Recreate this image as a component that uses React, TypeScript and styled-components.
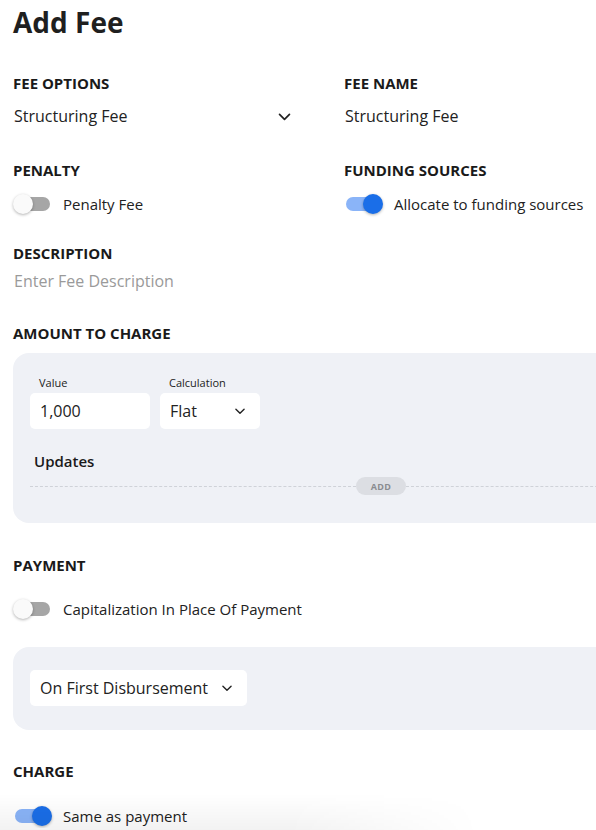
import styled, { createGlobalStyle } from 'styled-components';

const GlobalStyle = createGlobalStyle`
  html, body {
    margin: 0;
    padding: 0;
    background: #ffffff;
    overflow: hidden;
  }
  body {
    font-family: 'Open Sans', 'Noto Sans', sans-serif;
    color: #222;
  }
`;

const Chevron = ({ size = 14 }: { size?: number }) => (
  <svg width={size} height={size} viewBox="0 0 24 24" fill="none" stroke="#222" strokeWidth={2.4} strokeLinecap="round" strokeLinejoin="round">
    <polyline points="5 9 12 16 19 9" />
  </svg>
);

const Page = styled.div`
  width: 640px;
  padding: 4px 0 0 13px;
  box-sizing: border-box;
`;

const Title = styled.h1`
  margin: 0;
  font-size: 28px;
  line-height: 36px;
  font-weight: 700;
  color: #1f1f1f;
`;

const Grid = styled.div`
  display: grid;
  grid-template-columns: 301px 300px;
  column-gap: 30px;
  margin-top: 33px;
`;

const Field = styled.div<{ $span?: boolean; $top?: number; $gap: number }>`
  display: flex;
  flex-direction: column;
  gap: ${(p) => p.$gap}px;
  margin-top: ${(p) => p.$top ?? 0}px;
  grid-column: ${(p) => (p.$span ? '1 / -1' : 'auto')};
`;

const Label = styled.div`
  font-size: 15px;
  line-height: 20px;
  font-weight: 700;
  text-transform: uppercase;
  color: #1a1a1a;
`;

const Value = styled.div<{ $placeholder?: boolean }>`
  display: flex;
  align-items: center;
  justify-content: space-between;
  padding: 0 21px 0 1px;
  font-size: 16px;
  line-height: 24px;
  color: ${(p) => (p.$placeholder ? '#9a9a9a' : '#222')};
`;

const ToggleRow = styled.label<{ $top?: number }>`
  display: flex;
  align-items: center;
  gap: 13px;
  margin-top: ${(p) => p.$top ?? 0}px;
  font-size: 15px;
  line-height: 24px;
  color: #222;
`;

const Track = styled.span<{ $on?: boolean }>`
  position: relative;
  display: inline-block;
  width: 35px;
  height: 14px;
  margin-left: 2px;
  border-radius: 7px;
  background: ${(p) => (p.$on ? '#8ab4f8' : '#a6a6a6')};
  flex-shrink: 0;
`;

const Thumb = styled.span<{ $on?: boolean }>`
  position: absolute;
  top: -3px;
  left: ${(p) => (p.$on ? '17px' : '-2px')};
  width: 20px;
  height: 20px;
  border-radius: 50%;
  background: ${(p) => (p.$on ? '#1a6ee8' : '#fafafa')};
  box-shadow: 0 1px 3px rgba(0, 0, 0, 0.3);
`;

const Toggle = ({ on, label, top }: { on?: boolean; label: string; top?: number }) => (
  <ToggleRow $top={top}>
    <Track $on={on}>
      <Thumb $on={on} />
    </Track>
    {label}
  </ToggleRow>
);

const Section = styled.div<{ $top: number; $gap: number }>`
  display: flex;
  flex-direction: column;
  gap: ${(p) => p.$gap}px;
  margin-top: ${(p) => p.$top}px;
`;

const Panel = styled.div`
  background: #eff1f6;
  border-radius: 16px;
  padding: 22px 17px 28px;
  display: flex;
  flex-direction: column;
`;

const InputRow = styled.div`
  display: flex;
  gap: 10px;
`;

const InputGroup = styled.div`
  display: flex;
  flex-direction: column;
  gap: 2px;
`;

const SmallLabel = styled.div`
  font-size: 11px;
  line-height: 16px;
  padding-left: 9px;
  color: #222;
`;

const Box = styled.div<{ $width: number }>`
  width: ${(p) => p.$width}px;
  height: 36px;
  box-sizing: border-box;
  background: #fff;
  border-radius: 5px;
  padding: 0 13px 0 10px;
  display: flex;
  align-items: center;
  justify-content: space-between;
  gap: 8px;
  font-size: 16px;
  white-space: nowrap;
  color: #222;

  svg {
    flex-shrink: 0;
  }
`;

const Updates = styled.div`
  margin: 21px 0 0 4px;
  font-size: 15px;
  font-weight: 600;
  line-height: 22px;
  color: #1a1a1a;
`;

const DashRow = styled.div`
  display: flex;
  align-items: center;
  margin-top: 5px;
`;

const Dash = styled.div<{ $width?: number }>`
  flex: ${(p) => (p.$width ? `0 0 ${p.$width}px` : '1')};
  border-top: 1px dashed #cfd2d8;
`;

const AddPill = styled.button`
  border: none;
  background: #dcdee3;
  color: #8a8c90;
  font-family: inherit;
  font-size: 9px;
  font-weight: 700;
  letter-spacing: 0.3px;
  width: 50px;
  height: 18px;
  border-radius: 9px;
  padding: 0;
`;

const PaymentPanel = styled(Panel)`
  padding: 23px 17px 24px;
  margin-top: 26px;
`;

const BottomShade = styled.div`
  position: fixed;
  left: 0;
  bottom: 0;
  width: 480px;
  height: 36px;
  pointer-events: none;
  background: linear-gradient(to bottom, rgba(0, 0, 0, 0), rgba(0, 0, 0, 0.05));
  -webkit-mask-image: linear-gradient(to right, #000 60%, transparent);
  mask-image: linear-gradient(to right, #000 60%, transparent);
`;

export default function App() {
  return (
    <>
      <GlobalStyle />
      <Page>
        <Title>Add Fee</Title>
        <Grid>
          <Field $gap={11}>
            <Label>Fee Options</Label>
            <Value>
              Structuring Fee
              <Chevron size={17} />
            </Value>
          </Field>
          <Field $gap={11}>
            <Label>Fee Name</Label>
            <Value>Structuring Fee</Value>
          </Field>
          <Field $gap={12} $top={32}>
            <Label>Penalty</Label>
            <Toggle label="Penalty Fee" />
          </Field>
          <Field $gap={12} $top={32}>
            <Label>Funding Sources</Label>
            <Toggle on label="Allocate to funding sources" />
          </Field>
          <Field $span $gap={6} $top={27}>
            <Label>Description</Label>
            <Value $placeholder>Enter Fee Description</Value>
          </Field>
        </Grid>

        <Section $top={30} $gap={10}>
          <Label>Amount to Charge</Label>
          <Panel>
            <InputRow>
              <InputGroup>
                <SmallLabel>Value</SmallLabel>
                <Box $width={120}>1,000</Box>
              </InputGroup>
              <InputGroup>
                <SmallLabel>Calculation</SmallLabel>
                <Box $width={100}>
                  Flat
                  <Chevron />
                </Box>
              </InputGroup>
            </InputRow>
            <Updates>Updates</Updates>
            <DashRow>
              <Dash $width={326} />
              <AddPill>ADD</AddPill>
              <Dash />
            </DashRow>
          </Panel>
        </Section>

        <Section $top={32} $gap={0}>
          <Label>Payment</Label>
          <Toggle top={22} label="Capitalization In Place Of Payment" />
          <PaymentPanel>
            <Box $width={217}>
              On First Disbursement
              <Chevron />
            </Box>
          </PaymentPanel>
        </Section>

        <Section $top={31} $gap={0}>
          <Label>Charge</Label>
          <Toggle on top={23} label="Same as payment" />
        </Section>
      </Page>
      <BottomShade />
    </>
  );
}
